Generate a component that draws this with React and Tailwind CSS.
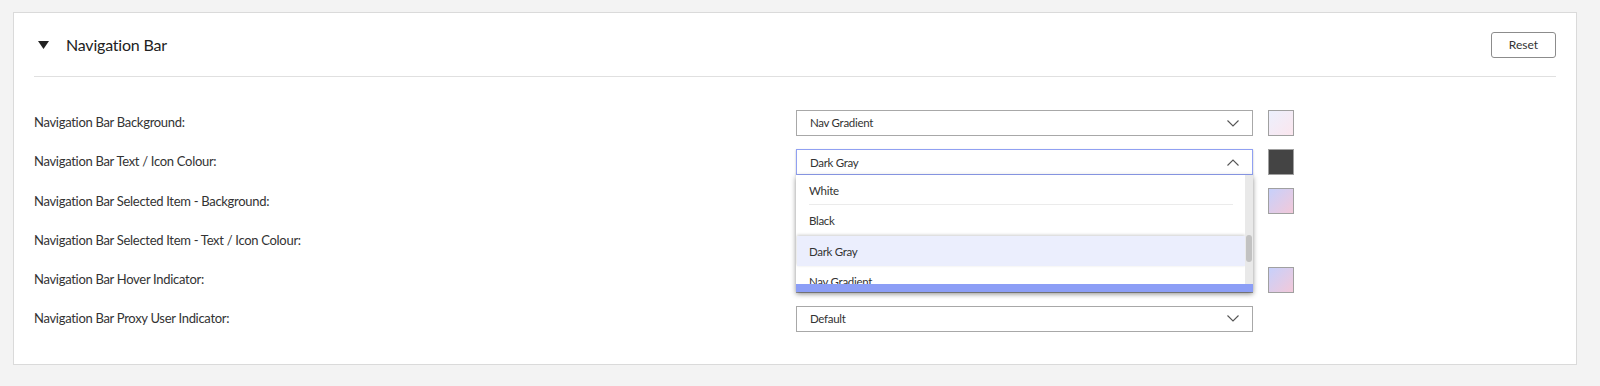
import React from "react";

const font = { fontFamily: "Lato, 'Noto Sans', sans-serif" };

function Chevron({ up }) {
  return (
    <svg width="12" height="7" viewBox="0 0 12 7" className="shrink-0">
      {up ? (
        <polyline points="0.5,6.5 6,1 11.5,6.5" fill="none" stroke="#555" strokeWidth="1.1" />
      ) : (
        <polyline points="0.5,0.5 6,6 11.5,0.5" fill="none" stroke="#555" strokeWidth="1.1" />
      )}
    </svg>
  );
}

function Select({ value, open, children }) {
  return (
    <div className="relative w-[457px] h-[26px]">
      <div
        className={
          "h-full flex items-center justify-between pl-[13px] pr-[13px] bg-white border " +
          (open ? "border-[#90a0f2] shadow-[0_1px_2px_rgba(0,0,0,0.25)]" : "border-[#a8a8a8]")
        }
      >
        <span className="text-[11.5px] tracking-[-0.3px] text-[#333]">{value}</span>
        <Chevron up={open} />
      </div>
      {children}
    </div>
  );
}

function Swatch({ cls }) {
  return <div className={"ml-[15px] w-[26px] h-[26px] border border-[#a0a0a0] " + cls} />;
}

function Dropdown() {
  return (
    <div className="absolute left-0 top-[26px] w-[457px] h-[117px] bg-white z-10 shadow-[0_2px_5px_rgba(0,0,0,0.45)] flex flex-col">
      <div className="flex h-[109px] overflow-hidden">
        <div className="flex-1 flex flex-col pl-[1px]">
          <div className="h-[30px] shrink-0 flex items-center px-[12px] text-[11.5px] tracking-[-0.3px] text-[#333] relative">
            White
            <div className="absolute bottom-0 left-[12px] right-[12px] h-px bg-[#ebebeb]" />
          </div>
          <div className="h-[31px] shrink-0 flex items-center px-[12px] text-[11.5px] tracking-[-0.3px] text-[#333]">Black</div>
          <div className="h-[30px] shrink-0 flex items-center px-[12px] text-[11.5px] tracking-[-0.3px] text-[#333] bg-[#ebeefd] shadow-[0_-1px_3px_rgba(0,0,0,0.2)]">
            Dark Gray
          </div>
          <div className="h-[30px] shrink-0 flex items-center px-[12px] text-[11.5px] tracking-[-0.3px] text-[#333]">Nav Gradient</div>
        </div>
        <div className="w-[8px] bg-[#e9e9e9] relative">
          <div className="absolute left-[1px] right-[1px] top-[60px] h-[27px] bg-[#c2c2c2] rounded-[3px]" />
        </div>
      </div>
      <div className="h-[8px] bg-[#8c9ef6]" />
    </div>
  );
}

const rows = [
  { label: "Navigation Bar Background:", value: "Nav Gradient", swatch: "bg-gradient-to-br from-[#ecf0fd] to-[#fbe6ee]" },
  { label: "Navigation Bar Text / Icon Colour:", value: "Dark Gray", swatch: "bg-[#444444]", open: true },
  { label: "Navigation Bar Selected Item - Background:", value: "Nav Gradient", swatch: "bg-gradient-to-br from-[#c6d0fb] to-[#f2c8d9]" },
  { label: "Navigation Bar Selected Item - Text / Icon Colour:", value: "White", swatch: null },
  { label: "Navigation Bar Hover Indicator:", value: "Nav Gradient", swatch: "bg-gradient-to-br from-[#c6d0fb] to-[#f2c8d9]" },
  { label: "Navigation Bar Proxy User Indicator:", value: "Default", swatch: null },
];

export default function App() {
  return (
    <div className="bg-[#f3f3f3] w-[1600px] h-[386px] pt-[12px] pl-[13px] pr-[23px]" style={font}>
      <div className="bg-white border border-[#dadada] h-[353px] px-[20px]">
        <div className="h-[64px] flex items-center justify-between border-b border-[#e0e0e0]">
          <div className="flex items-center">
            <svg width="11" height="8" viewBox="0 0 11 8" className="ml-[4px]">
              <polygon points="0,0 11,0 5.5,8" fill="#222" />
            </svg>
            <span className="ml-[17px] text-[16px] tracking-[-0.2px] text-[#222]">Navigation Bar</span>
          </div>
          <button className="w-[65px] h-[26px] border border-[#8c8c8c] rounded-[3px] text-[12px] text-[#333] bg-white">
            Reset
          </button>
        </div>
        <div className="pt-[33px] flex flex-col gap-[13.2px]">
          {rows.map((r, i) => (
            <div key={i} className="flex items-center h-[26px]">
              <div className="w-[762px] text-[13px] tracking-[-0.3px] text-[#333]">{r.label}</div>
              <Select value={r.value} open={r.open}>
                {r.open && <Dropdown />}
              </Select>
              {r.swatch && <Swatch cls={r.swatch} />}
            </div>
          ))}
        </div>
      </div>
    </div>
  );
}
